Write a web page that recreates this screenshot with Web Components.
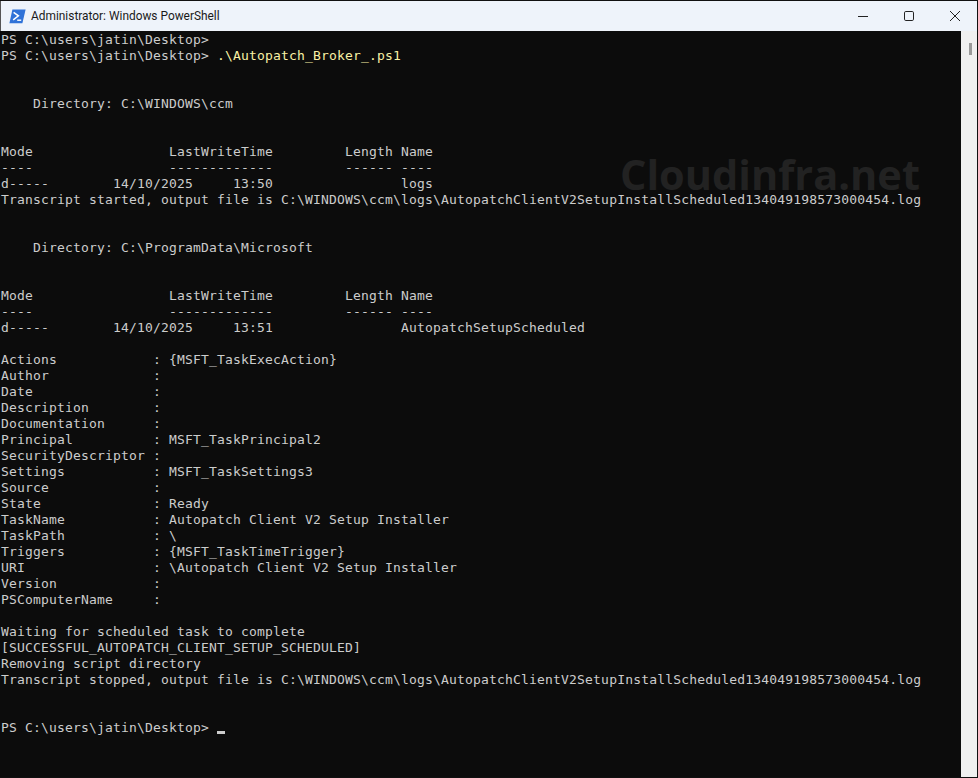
<!DOCTYPE html>
<html><head><meta charset="utf-8"><style>
html,body{margin:0;padding:0;background:#0c0c0c;height:100%;overflow:hidden}
</style></head><body>
<ps-window>
<ps-titlebar slot="title">Administrator: Windows PowerShell</ps-titlebar>
<ps-console>PS C:\users\jatin\Desktop>
PS C:\users\jatin\Desktop> <span class="y">.\Autopatch_Broker_.ps1</span>


    Directory: C:\WINDOWS\ccm


Mode                 LastWriteTime         Length Name
----                 -------------         ------ ----
d-----        14/10/2025     13:50                logs
Transcript started, output file is C:\WINDOWS\ccm\logs\AutopatchClientV2SetupInstallScheduled134049198573000454.log


    Directory: C:\ProgramData\Microsoft


Mode                 LastWriteTime         Length Name
----                 -------------         ------ ----
d-----        14/10/2025     13:51                AutopatchSetupScheduled

Actions            : {MSFT_TaskExecAction}
Author             :
Date               :
Description        :
Documentation      :
Principal          : MSFT_TaskPrincipal2
SecurityDescriptor :
Settings           : MSFT_TaskSettings3
Source             :
State              : Ready
TaskName           : Autopatch Client V2 Setup Installer
TaskPath           : \
Triggers           : {MSFT_TaskTimeTrigger}
URI                : \Autopatch Client V2 Setup Installer
Version            :
PSComputerName     :

Waiting for scheduled task to complete
[SUCCESSFUL_AUTOPATCH_CLIENT_SETUP_SCHEDULED]
Removing script directory
Transcript stopped, output file is C:\WINDOWS\ccm\logs\AutopatchClientV2SetupInstallScheduled134049198573000454.log


PS C:\users\jatin\Desktop> <i></i></ps-console>
</ps-window>
<script>
class PsWindow extends HTMLElement{constructor(){super();this.attachShadow({mode:'open'}).innerHTML=`<style>
:host{display:flex;flex-direction:column;width:978px;height:778px;background:#0c0c0c;box-sizing:border-box;border:1px solid #101010;border-left-width:0;position:relative}
.main{flex:1;display:flex;min-height:0}
.body{flex:1;min-width:0;overflow:hidden;position:relative}
.sb{width:16px;background:#f0f0f0;position:relative;flex:none}
.thumb{position:absolute;left:8px;top:12px;width:3px;height:12px;background:#9a9a9a}
</style><slot name="title"></slot><div class="main"><div class="body"><slot></slot></div><div class="sb"><div class="thumb"></div></div></div>`}}
class PsTitlebar extends HTMLElement{constructor(){super();this.attachShadow({mode:'open'}).innerHTML=`<style>
:host{display:flex;align-items:center;height:30px;background:#eef3fa;color:#1a1a1a;font:11.9px Roboto,"Open Sans",sans-serif;flex:none;border-left:1px solid #555}
svg{display:block}
.ic{margin:0 5px 0 8px}
.t{flex:1}
.b{width:46px;display:flex;justify-content:center}
.x{margin-right:-1px;margin-left:0}
</style><svg class="ic" width="17" height="15" viewBox="0 0 17 15"><path d="M3.4.6H16.6L13.4 14.2H.4z" fill="#2f72d8"/><path d="M4.6 3.4l4.8 3.4-5.2 4" fill="none" stroke="#fff" stroke-width="1.5"/><path d="M8.2 11.2h4" stroke="#fff" stroke-width="1.4"/></svg><span class="t"><slot></slot></span>
<div class="b"><svg width="12" height="12" viewBox="0 0 12 12"><path d="M1 6.5H11" stroke="#222" stroke-width="1"/></svg></div>
<div class="b"><svg width="12" height="12" viewBox="0 0 12 12"><rect x="1.5" y="1.5" width="9" height="9" rx="1.3" fill="none" stroke="#222"/></svg></div>
<div class="b x"><svg width="12" height="12" viewBox="0 0 12 12"><path d="M1 1L11 11M11 1L1 11" stroke="#222"/></svg></div>`}}
class PsConsole extends HTMLElement{constructor(){super();const text=this.innerHTML;this.innerHTML='';this.attachShadow({mode:'open'}).innerHTML=`<style>
:host{display:block;position:relative;height:100%;background:#0c0c0c;color:#cccccc;font:13px/16px "DejaVu Sans Mono",monospace;letter-spacing:.175px;white-space:pre;padding:1px 0 0 1px;box-sizing:border-box}
.y{color:#f9f1a5}
i{display:inline-block;width:8px;height:3px;background:#ccc;vertical-align:-2px}
.wm{position:absolute;left:620px;top:125px;font:bold 41.5px "Open Sans",sans-serif;color:#222;letter-spacing:0;line-height:36px}
.txt{position:relative}
</style><div class="wm">Cloudinfra.net</div><div class="txt">${text}</div>`}}
customElements.define('ps-window',PsWindow);customElements.define('ps-titlebar',PsTitlebar);customElements.define('ps-console',PsConsole);
</script></body></html>
